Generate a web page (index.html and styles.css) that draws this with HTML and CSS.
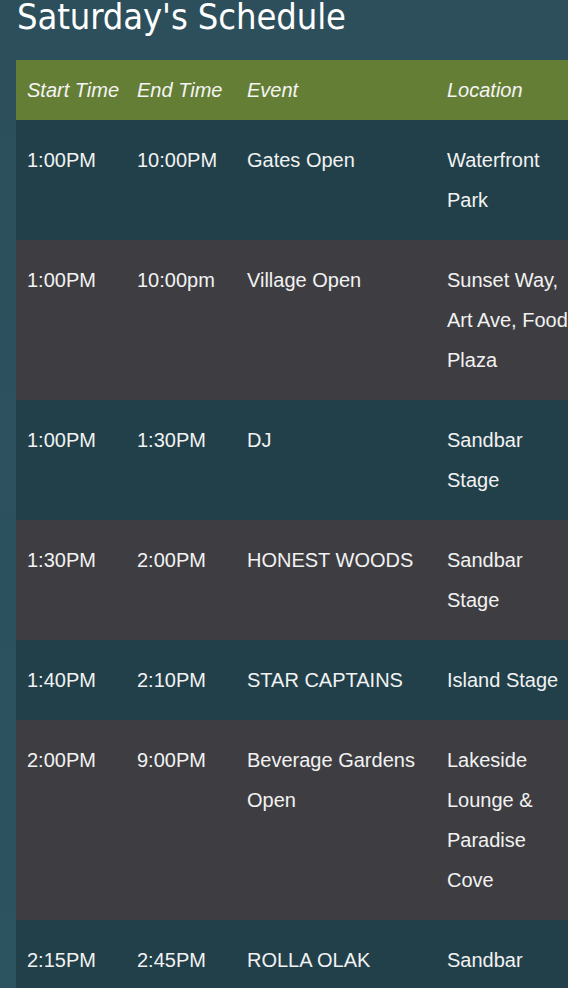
FILE: index.html
```html
<!DOCTYPE html>
<html lang="en">
<head>
<meta charset="utf-8">
<title>Saturday's Schedule</title>
<link rel="stylesheet" href="styles.css">
</head>
<body>
<div class="page">
  <h1 class="title">Saturday's Schedule</h1>
  <table class="schedule">
    <colgroup>
      <col class="c-start"><col class="c-end"><col class="c-event"><col class="c-loc">
    </colgroup>
    <thead>
      <tr><th>Start Time</th><th>End Time</th><th>Event</th><th>Location</th></tr>
    </thead>
    <tbody>
      <tr><td>1:00PM</td><td>10:00PM</td><td>Gates Open</td><td>Waterfront Park</td></tr>
      <tr><td>1:00PM</td><td>10:00pm</td><td>Village Open</td><td>Sunset Way, Art Ave, Food Plaza</td></tr>
      <tr><td>1:00PM</td><td>1:30PM</td><td>DJ</td><td>Sandbar Stage</td></tr>
      <tr><td>1:30PM</td><td>2:00PM</td><td>HONEST WOODS</td><td>Sandbar Stage</td></tr>
      <tr><td>1:40PM</td><td>2:10PM</td><td>STAR CAPTAINS</td><td>Island Stage</td></tr>
      <tr><td>2:00PM</td><td>9:00PM</td><td>Beverage Gardens Open</td><td>Lakeside Lounge &amp; Paradise Cove</td></tr>
      <tr><td>2:15PM</td><td>2:45PM</td><td>ROLLA OLAK</td><td>Sandbar Stage</td></tr>
    </tbody>
  </table>
</div>
</body>
</html>
```
FILE: styles.css
```css
html, body {
  margin: 0;
  padding: 0;
  overflow: hidden;
}
body {
  background: linear-gradient(180deg, #2d4f5c 0%, #2c5360 100%);
  min-height: 988px;
  font-family: "Liberation Sans", Arial, sans-serif;
  color: #f2f2f2;
}
.page {
  padding: 0 0 0 16px;
  width: 600px;
}
.title {
  margin: 0;
  padding: 0 0 0 1px;
  height: 60px;
  font-family: "DejaVu Sans Condensed", "DejaVu Sans", sans-serif;
  font-weight: normal;
  font-size: 36px;
  line-height: 34px;
  color: #ffffff;
  letter-spacing: -0.1px;
}
.schedule {
  border-collapse: collapse;
  table-layout: fixed;
  width: 566px;
}
.c-start { width: 110px; }
.c-end { width: 110px; }
.c-event { width: 200px; }
.c-loc { width: 146px; }
.schedule th {
  background: #657e36;
  font-style: italic;
  font-weight: normal;
  text-align: left;
  white-space: nowrap;
  font-size: 20px;
  line-height: 20px;
  padding: 20px 9px 20px 11px;
  color: #f4f4f4;
}
.schedule td {
  font-size: 20px;
  line-height: 40px;
  padding: 20px 9px 20px 11px;
  vertical-align: top;
}
.schedule tbody tr:nth-child(odd) td { background: #21404a; }
.schedule tbody tr:nth-child(even) td { background: #3e3e42; }
```
